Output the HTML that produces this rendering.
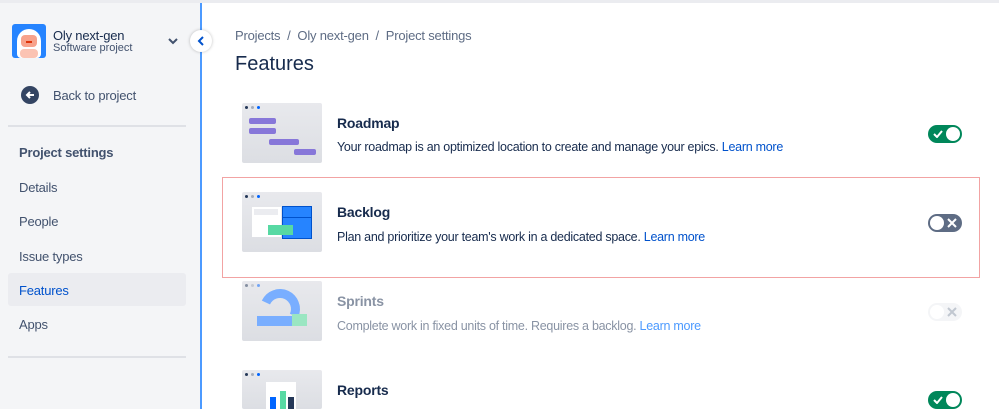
<!DOCTYPE html><html><head><style>
*{box-sizing:border-box;margin:0;padding:0}
html{width:999px;height:409px;overflow:hidden}
body{width:999px;height:409px;overflow:hidden;background:#fff;font-family:"Liberation Sans",sans-serif;color:#172b4d;position:relative}
.abs{position:absolute}
.side{left:0;top:0;width:200px;height:409px;background:#f4f5f7;border-top:3px solid #ebecf0}
.bl{left:200px;top:3px;width:2px;height:406px;background:#4c9aff}
.nav{position:absolute;left:19px;font-size:13px;color:#42526e;letter-spacing:-0.2px}
.div{position:absolute;left:8px;width:178px;height:2px;background:#dfe1e6}
.row .t{position:absolute;left:337px;font-size:14px;font-weight:bold;color:#172b4d;letter-spacing:-0.2px}
.d{position:absolute;left:337px;font-size:12.5px;color:#172b4d;letter-spacing:-0.27px}
.d a{color:#0052cc;text-decoration:none}
.img{position:absolute;left:242px;width:80px;height:60px;background:linear-gradient(#e8e9ed,#dcdee3);border-radius:2px;overflow:hidden}
.tg{position:absolute;left:928px;width:34px;height:18px;border-radius:9px}
.tg i{position:absolute;top:2px;width:14px;height:14px;border-radius:50%;background:#fff}
.dots{position:absolute;left:3px;top:3px;font-size:0}
.dots b{display:inline-block;width:3px;height:3px;border-radius:50%;margin-right:3px}
</style></head><body>
<div class="abs" style="left:0;top:0;width:999px;height:3px;background:#ebecf0"></div>
<div class="abs side"></div>
<div class="abs bl"></div>
<div class="abs" style="left:12px;top:24px;width:34px;height:34px;background:#2684ff;border-radius:3px;overflow:hidden">
<div class="abs" style="left:5px;top:5px;width:24px;height:29px;background:#fff;border-radius:12px 12px 4px 4px"></div>
<div class="abs" style="left:9px;top:11px;width:16px;height:12px;background:#f7a28b;border-radius:4px"></div>
<div class="abs" style="left:14px;top:17px;width:6px;height:2px;background:#de350b"></div>
<div class="abs" style="left:8px;top:25px;width:18px;height:9px;background:#fbc3b3;border-radius:4px"></div>
</div>
<div class="abs" style="left:53px;top:28px;font-size:13px;color:#172b4d;letter-spacing:-0.2px">Oly next-gen</div>
<div class="abs" style="left:53px;top:42px;font-size:11px;color:#42526e">Software project</div>
<svg class="abs" style="left:168px;top:37px" width="10" height="8"><path d="M1 2l4 4 4-4" stroke="#42526e" stroke-width="2" fill="none"/></svg>
<div class="abs" style="left:190px;top:30px;width:22px;height:22px;border-radius:50%;background:#fff;box-shadow:0 0 3px rgba(0,0,0,.25)"></div>
<svg class="abs" style="left:197px;top:36px" width="8" height="10"><path d="M6 1L2 5l4 4" stroke="#0052cc" stroke-width="2" fill="none"/></svg>
<div class="abs" style="left:21px;top:86px;width:18px;height:18px;border-radius:50%;background:#344563"></div>
<svg class="abs" style="left:24px;top:89px" width="12" height="12"><path d="M10 6H3M6 3L3 6l3 3" stroke="#fff" stroke-width="2" fill="none"/></svg>
<div class="nav" style="left:53px;top:88px;color:#42526e">Back to project</div>
<div class="div" style="top:125px"></div>
<div class="nav" style="top:145px;font-weight:bold;color:#42526e">Project settings</div>
<div class="nav" style="top:180px">Details</div>
<div class="nav" style="top:214px">People</div>
<div class="nav" style="top:249px">Issue types</div>
<div class="abs" style="left:8px;top:273px;width:178px;height:33px;background:#ebecf0;border-radius:3px"></div>
<div class="nav" style="top:283px;color:#0052cc">Features</div>
<div class="nav" style="top:317px">Apps</div>
<div class="div" style="top:356px"></div>
<div class="abs" style="left:235px;top:28px;font-size:13px;color:#5e6c84;letter-spacing:-0.2px">Projects &nbsp;/ &nbsp;Oly next-gen &nbsp;/ &nbsp;Project settings</div>
<div class="abs" style="left:235px;top:53px;font-size:20px;color:#172b4d">Features</div>

<div class="img" style="top:103px"><div class="dots"><b style="background:#253858"></b><b style="background:#a5adba"></b><b style="background:#0065ff"></b></div>
<div class="abs" style="left:7px;top:15px;width:27px;height:6px;background:#8777d9;border-radius:2px"></div>
<div class="abs" style="left:7px;top:25px;width:27px;height:6px;background:#8777d9;border-radius:2px"></div>
<div class="abs" style="left:27px;top:36px;width:30px;height:6px;background:#8777d9;border-radius:2px"></div>
<div class="abs" style="left:52px;top:46px;width:22px;height:6px;background:#8777d9;border-radius:2px"></div></div>
<div class="row"><div class="t" style="top:115px">Roadmap</div></div>
<div class="d" style="top:140px">Your roadmap is an optimized location to create and manage your epics. <a>Learn more</a></div>
<div class="tg" style="top:125px;background:#00875a"><i style="right:2px"></i><svg class="abs" style="left:5px;top:5px" width="10" height="8"><path d="M1 4l3 3 5-6" stroke="#fff" stroke-width="2" fill="none"/></svg></div>

<div class="abs" style="left:222px;top:177px;width:758px;height:101px;border:1px solid #f2a3a3"></div>
<div class="img" style="top:192px"><div class="dots"><b style="background:#253858"></b><b style="background:#a5adba"></b><b style="background:#0065ff"></b></div>
<div class="abs" style="left:10px;top:15px;width:29px;height:30px;background:#fff"></div>
<div class="abs" style="left:12px;top:17px;width:24px;height:6px;background:#ebecf0"></div>
<div class="abs" style="left:40px;top:14px;width:30px;height:33px;background:#2684ff;border:1px solid #0052cc"></div>
<div class="abs" style="left:41px;top:25px;width:28px;height:1px;background:#0052cc"></div>
<div class="abs" style="left:26px;top:33px;width:25px;height:10px;background:#57d9a3"></div></div>
<div class="row"><div class="t" style="top:204px">Backlog</div></div>
<div class="d" style="top:230px">Plan and prioritize your team's work in a dedicated space. <a>Learn more</a></div>
<div class="tg" style="top:214px;background:#5e6c84"><i style="left:2px"></i><svg class="abs" style="left:19px;top:4px" width="10" height="10"><path d="M1 1l8 8M9 1l-8 8" stroke="#fff" stroke-width="2"/></svg></div>

<div class="img" style="top:281px"><div class="dots" style="opacity:.5"><b style="background:#253858"></b><b style="background:#a5adba"></b><b style="background:#0065ff"></b></div>
<div class="abs" style="left:18px;top:8px;width:40px;height:40px;border:9px solid #79aeff;border-radius:50%;border-left-color:transparent;border-bottom-color:transparent;transform:rotate(-20deg)"></div>
<div class="abs" style="left:15px;top:35px;width:36px;height:10px;background:#79aeff"></div>
<div class="abs" style="left:50px;top:33px;width:15px;height:12px;background:#9ae6c2"></div></div>
<div class="row"><div class="t" style="top:293px;color:#8993a4;font-weight:bold">Sprints</div></div>
<div class="d" style="top:319px;color:#8993a4">Complete work in fixed units of time. Requires a backlog. <a style="color:#4c9aff">Learn more</a></div>
<div class="tg" style="top:303px;background:#f4f5f7"><i style="left:2px"></i><svg class="abs" style="left:19px;top:4px" width="10" height="10"><path d="M1 1l8 8M9 1l-8 8" stroke="#c1c7d0" stroke-width="2"/></svg></div>

<div class="img" style="top:370px;height:39px"><div class="dots"><b style="background:#253858"></b><b style="background:#a5adba"></b><b style="background:#0065ff"></b></div>
<div class="abs" style="left:24px;top:12px;width:30px;height:27px;background:#fff"></div>
<div class="abs" style="left:28px;top:27px;width:6px;height:12px;background:#0065ff"></div>
<div class="abs" style="left:38px;top:21px;width:6px;height:18px;background:#57d9a3"></div>
<div class="abs" style="left:46px;top:27px;width:6px;height:12px;background:#253858"></div></div>
<div class="row"><div class="t" style="top:382px">Reports</div></div>
<div class="tg" style="top:391px;background:#00875a"><i style="right:2px"></i><svg class="abs" style="left:5px;top:5px" width="10" height="8"><path d="M1 4l3 3 5-6" stroke="#fff" stroke-width="2" fill="none"/></svg></div>
</body></html>
